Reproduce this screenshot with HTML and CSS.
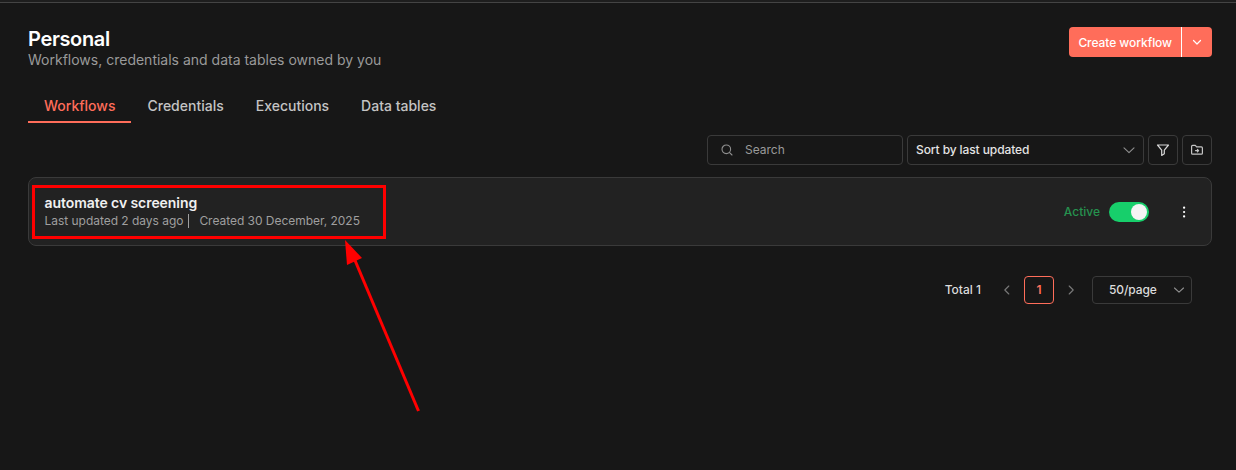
FILE: index.html
```html
<!DOCTYPE html>
<html lang="en">
<head>
<meta charset="utf-8">
<title>Personal</title>
<link rel="stylesheet" href="styles.css">
</head>
<body>
<div class="topline"></div>
<main class="page">
  <header class="head">
    <div>
      <h1 class="title">Personal</h1>
      <p class="subtitle">Workflows, credentials and data tables owned by you</p>
    </div>
    <div class="create">
      <span class="create-label">Create workflow</span>
      <span class="create-caret">
        <svg width="12" height="12" viewBox="0 0 12 12" fill="none" stroke="#fff" stroke-width="1.2" stroke-linecap="round" stroke-linejoin="round"><path d="M2.5 4.5 6 8l3.5-3.5"/></svg>
      </span>
    </div>
  </header>

  <nav class="tabs">
    <a class="tab tab-active">Workflows</a>
    <a class="tab">Credentials</a>
    <a class="tab">Executions</a>
    <a class="tab">Data tables</a>
  </nav>

  <div class="toolbar">
    <div class="field search">
      <svg width="14" height="14" viewBox="0 0 14 14" fill="none" stroke="#8f8f8f" stroke-width="1.1" stroke-linecap="round"><circle cx="6.3" cy="6.3" r="4.3"/><path d="m9.6 9.6 2.4 2.4"/></svg>
      <span>Search</span>
    </div>
    <div class="field sort">
      <span>Sort by last updated</span>
      <svg width="14" height="14" viewBox="0 0 14 14" fill="none" stroke="#8f8f8f" stroke-width="1.1" stroke-linecap="round" stroke-linejoin="round"><path d="M2 4.8 7 9.6l5-4.8"/></svg>
    </div>
    <div class="icon-btn">
      <svg width="14" height="14" viewBox="0 0 14 14" fill="none" stroke="#d8d8d8" stroke-width="1.2" stroke-linejoin="round"><path d="M1.5 2h11L8.3 7.2v3.6l-2.6 1.6V7.2z"/></svg>
    </div>
    <div class="icon-btn">
      <svg width="14" height="14" viewBox="0 0 14 14" fill="none" stroke="#c4c4c4" stroke-width="1.2" stroke-linejoin="round" stroke-linecap="round"><path d="M1.6 3.4c0-.6.4-1 1-1h2.7l1.3 1.5h4.8c.6 0 1 .4 1 1v5.3c0 .6-.4 1-1 1H2.6c-.6 0-1-.4-1-1z"/><path d="M5.5 7.6h3M7.4 6.4l1.2 1.2-1.2 1.2"/></svg>
    </div>
  </div>

  <section class="card">
    <div>
      <div class="card-title">automate cv screening</div>
      <div class="card-meta"><span>Last updated 2 days ago</span><span class="sep"></span><span>Created 30 December, 2025</span></div>
    </div>
    <div class="card-actions">
      <span class="status">Active</span>
      <span class="switch"><span class="knob"></span></span>
      <svg class="more" width="4" height="12" viewBox="0 0 4 12" fill="#fff"><rect x="1" y="0.5" width="2.2" height="2.2" rx="1"/><rect x="1" y="4.9" width="2.2" height="2.2" rx="1"/><rect x="1" y="9.3" width="2.2" height="2.2" rx="1"/></svg>
    </div>
  </section>

  <div class="pager">
    <span class="total">Total 1</span>
    <svg class="arrow-l" width="12" height="12" viewBox="0 0 12 12" fill="none" stroke="#7a7a7a" stroke-width="1.1" stroke-linecap="round" stroke-linejoin="round"><path d="M7.8 2 3.8 6l4 4"/></svg>
    <span class="page-num">1</span>
    <svg class="arrow-r" width="12" height="12" viewBox="0 0 12 12" fill="none" stroke="#7a7a7a" stroke-width="1.1" stroke-linecap="round" stroke-linejoin="round"><path d="m4.2 2 4 4-4 4"/></svg>
    <div class="per-page">
      <span>50/page</span>
      <svg width="12" height="12" viewBox="0 0 12 12" fill="none" stroke="#8f8f8f" stroke-width="1.1" stroke-linecap="round" stroke-linejoin="round"><path d="M1.5 4 6 8.2 10.5 4"/></svg>
    </div>
  </div>
</main>

<div class="mark-box"></div>
<svg class="mark-arrow" width="1236" height="470" viewBox="0 0 1236 470">
  <path d="M418.5 411 354 258" stroke="#f00" stroke-width="3" fill="none"/>
  <path d="M345 240 347 265 362 258z" fill="#f00"/>
</svg>
</body>
</html>
```
FILE: styles.css
```css
* { box-sizing: border-box; }
html, body { margin: 0; height: 100%; }
body {
  background: #171717;
  color: #e8e8e8;
  font-family: Inter, "Liberation Sans", sans-serif;
  overflow: hidden;
  position: relative;
}
.topline { height: 3px; background: #1e1e1e; border-bottom: 1px solid #444; }
.page { padding: 24px 24px 0 28px; }

.head { display: flex; justify-content: space-between; align-items: flex-start; }
.title { margin: 0; font-size: 20px; line-height: 24px; font-weight: 600; letter-spacing: -0.35px; color: #fff; }
.subtitle { margin: -1px 0 0; font-size: 14px; line-height: 20px; color: #9a9a9a; }
.create { display: flex; align-items: stretch; height: 30px; background: #ff6d5a; border-radius: 4px; color: #fff; font-size: 12px; font-weight: 500; }
.create-label { display: flex; align-items: center; padding: 0 9px; letter-spacing: -0.06px; }
.create-caret { display: flex; align-items: center; justify-content: center; width: 31px; border-left: 1px solid #fff; }

.tabs { display: flex; margin-top: 26px; }
.tab { display: block; padding: 0 16px 5px; font-size: 14px; line-height: 20px; font-weight: 500; color: #c4c4c4; border-bottom: 2px solid transparent; }
.tab-active { color: #ff6d5a; border-bottom-color: #ff6d5a; }

.toolbar { display: flex; justify-content: flex-end; gap: 4px; margin-top: 12px; }
.field { display: flex; align-items: center; height: 30px; border: 1px solid #3a3a3a; border-radius: 4px; font-size: 12px; line-height: 16px; padding-bottom: 1px; }
.search { width: 196px; padding-left: 12px; gap: 11px; color: #9a9a9a; }
.sort { width: 237px; padding: 0 7px 1px 8px; justify-content: space-between; color: #e4e4e4; font-weight: 500; letter-spacing: -0.1px; }
.icon-btn { display: flex; align-items: center; justify-content: center; width: 30px; height: 30px; border: 1px solid #3a3a3a; border-radius: 4px; }

.card { display: flex; justify-content: space-between; align-items: center; height: 69px; margin-top: 12px; padding: 0 25px 0 15.5px; background: #222; border: 1px solid #3a3a3a; border-radius: 8px; }
.card-title { font-size: 14px; line-height: 18px; font-weight: 600; letter-spacing: -0.07px; color: #f0f0f0; margin-top: -1px; }
.card-meta { display: flex; align-items: center; font-size: 12px; line-height: 16px; color: #9f9f9f; margin-top: 1px; letter-spacing: -0.03px; }
.sep { width: 1px; height: 14px; background: #9f9f9f; margin: 0 10px 0 5px; }
.card-actions { display: flex; align-items: center; }
.status { font-size: 12px; font-weight: 500; color: #26934f; }
.switch { display: flex; justify-content: flex-end; align-items: center; width: 40px; height: 20px; margin-left: 9px; padding-right: 2px; background: #17cf6b; border-radius: 10px; }
.knob { width: 16px; height: 16px; border-radius: 50%; background: #f4f4f4; }
.more { margin-left: 33px; }

.pager { display: flex; align-items: center; margin-top: 30px; padding-right: 20px; justify-content: flex-end; height: 28px; line-height: 16px; }
.total { font-size: 12px; font-weight: 500; color: #dcdcdc; padding-bottom: 1px; }
.arrow-l { margin-left: 20px; }
.page-num { display: flex; align-items: center; justify-content: center; width: 30px; height: 28px; margin-left: 11px; padding-bottom: 1px; border: 1px solid #ff6d5a; border-radius: 4px; color: #ff6d5a; font-size: 12px; font-weight: 600; }
.arrow-r { margin-left: 11px; }
.per-page { display: flex; align-items: center; justify-content: space-between; width: 100px; height: 28px; margin-left: 15px; padding: 0 6px 0 16px; border: 1px solid #3a3a3a; border-radius: 4px; font-size: 12px; font-weight: 500; letter-spacing: -0.1px; color: #dcdcdc; }

.mark-box { position: absolute; left: 32px; top: 185px; width: 354px; height: 54px; border: 3px solid #f00; }
.mark-arrow { position: absolute; left: 0; top: 0; pointer-events: none; }
```
